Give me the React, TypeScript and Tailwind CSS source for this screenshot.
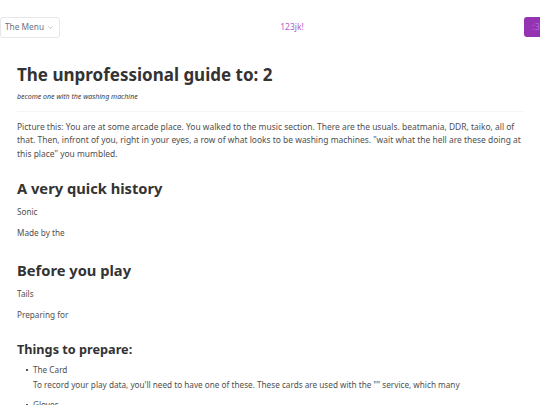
import { ChevronDown } from "lucide-react";

const font = { fontFamily: '"Noto Sans", "Open Sans", sans-serif' };

function TopBar() {
  return (
    <header className="flex h-[54px] items-center justify-between">
      <button className="flex h-[21px] items-center gap-[3px] rounded-[3px] border border-gray-200 bg-white pl-[4px] pr-[5px] text-[8.3px] text-gray-500">
        The Menu
        <ChevronDown className="size-[7px]" strokeWidth={1.5} />
      </button>
      <span className="text-[8.5px] text-[#b160cc]">123jk!</span>
      <button className="mr-[-8px] h-[20px] w-[24px] rounded-[3px] bg-[#9434b2] text-[9px] text-[#b56ad0]">
        :3
      </button>
    </header>
  );
}

function Item({ title, className, children }: { title: string; className?: string; children?: React.ReactNode }) {
  return (
    <li className={`flex gap-[5px] ${className ?? ""}`}>
      <span className="mt-[5.5px] size-[2.5px] shrink-0 bg-[#555]" />
      <div>
        {title}
        {children}
      </div>
    </li>
  );
}

export default function App() {
  return (
    <div className="min-h-[405px] bg-white" style={font}>
      <TopBar />
      <main className="px-[17px] pt-[8px]">
        <h1 className="text-[17px] font-bold leading-[26px] text-[#333]">
          The unprofessional guide to: 2
        </h1>
        <p className="mt-[4px] text-[7px] italic leading-[10px] text-[#3a3a3a]">
          become one with the washing machine
        </p>
        <hr className="mt-[9px] border-t border-gray-100" />
        <p className="mt-[8px] text-[8.45px] leading-[13.3px] text-[#4f4f4f]">
          Picture this: You are at some arcade place. You walked to the music section. There are the usuals. beatmania, DDR,
          taiko, all of that. Then, infront of you, right in your eyes, a row of what looks to be washing machines. "wait
          what the hell are these doing at this place" you mumbled.
        </p>

        <h2 className="mt-[17px] text-[14.7px] font-bold leading-[22px] text-[#333]">A very quick history</h2>
        <p className="mt-[6.5px] text-[8.2px] leading-[13px] text-[#4f4f4f]">Sonic</p>
        <p className="mt-[8px] text-[8.2px] leading-[13px] text-[#4f4f4f]">Made by the</p>

        <h2 className="mt-[19.5px] text-[14.7px] font-bold leading-[22px] text-[#333]">Before you play</h2>
        <p className="mt-[6.5px] text-[8.2px] leading-[13px] text-[#4f4f4f]">Tails</p>
        <p className="mt-[8px] text-[8.2px] leading-[13px] text-[#4f4f4f]">Preparing for</p>

        <h3 className="mt-[18.5px] text-[12.7px] font-bold leading-[18px] text-[#333]">Things to prepare:</h3>
        <ul className="mt-[5.5px] pl-[8.5px] text-[8.2px] leading-[13px] text-[#4f4f4f]">
          <Item title="The Card">
            <p className="mt-[2px]">
              To record your play data, you'll need to have one of these. These cards are used with the "" service, which
              many
            </p>
          </Item>
          <Item title="Gloves" className="mt-[7px]" />
        </ul>
      </main>
    </div>
  );
}
